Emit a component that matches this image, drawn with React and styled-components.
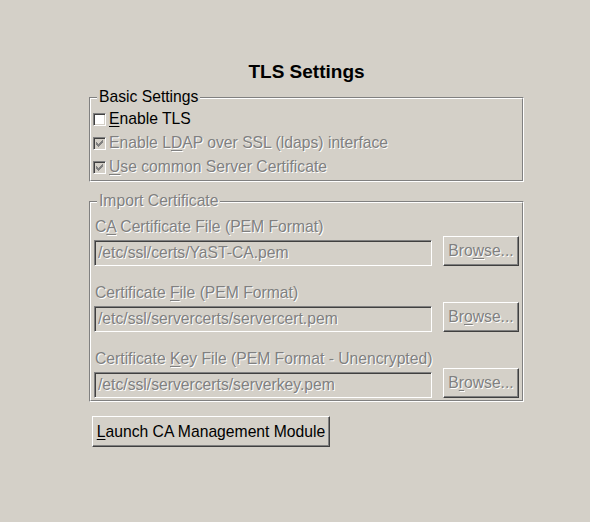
import React from 'react';
import styled, { createGlobalStyle, css } from 'styled-components';

const Global = createGlobalStyle`
  html, body { margin: 0; padding: 0; background: #d4d0c8; }
  body { font-family: "Liberation Sans", Arial, sans-serif; }
  *, *::before, *::after { box-sizing: border-box; }
`;

const disabledText = css`
  color: #808080;
  text-shadow: 1px 1px 0 #ffffff;
`;

const Page = styled.div`
  width: 590px;
  height: 522px;
  padding: 60px 0 0 89px;
  display: flex;
  flex-direction: column;
  font-size: 15.7px;
`;

const Column = styled.div`
  width: 435px;
  display: flex;
  flex-direction: column;
`;

const Title = styled.h1`
  margin: 0;
  font: bold 19px "Liberation Sans", Arial, sans-serif;
  line-height: 24px;
  text-align: center;
  color: #000;
`;

const Frame = styled.div`
  position: relative;
  margin-top: ${p => p.$mt}px;
  border: 1px solid;
  border-color: #808080 #ffffff #ffffff #808080;
`;

const FrameInner = styled.div`
  border: 1px solid;
  border-color: #ffffff #808080 #808080 #ffffff;
  display: flex;
  flex-direction: column;
  padding: ${p => p.$pad};
`;

const Legend = styled.span`
  position: absolute;
  top: -10px;
  left: 7px;
  padding: 0 2px;
  line-height: 18px;
  background: #d4d0c8;
  color: #000;
  ${p => p.$disabled && disabledText}
`;

const CheckRow = styled.label`
  display: flex;
  align-items: center;
  gap: 3px;
  height: 24px;
  padding-left: 1px;
  color: #000;
  ${p => p.$disabled && disabledText}
`;

const Box = styled.span`
  width: 13px;
  height: 13px;
  flex: none;
  display: flex;
  align-items: center;
  justify-content: center;
  border: 1px solid;
  border-color: #808080 #ffffff #ffffff #808080;
  box-shadow: inset 1px 1px 0 #404040, inset -1px -1px 0 #d4d0c8;
  background: ${p => (p.$disabled ? '#d4d0c8' : '#ffffff')};
`;

const Mn = styled.u`
  text-decoration: underline;
  text-underline-offset: 2px;
  text-decoration-thickness: 1px;
`;

const FieldGroup = styled.div`
  display: flex;
  flex-direction: column;
  & + & { margin-top: 18px; }
`;

const FieldLabel = styled.div`
  height: 18px;
  line-height: 18px;
  padding-left: 1px;
  ${p => (p.$disabled ? disabledText : 'color:#000;')}
`;

const FieldRow = styled.div`
  display: flex;
  align-items: flex-end;
  gap: 11px;
  height: 30px;
`;

const PathInput = styled.input`
  width: 338px;
  height: 26px;
  margin: 0;
  padding: 0 3px;
  font: 15.7px "Liberation Sans", Arial, sans-serif;
  background: #d4d0c8;
  border: 1px solid;
  border-color: #808080 #ffffff #ffffff #808080;
  box-shadow: inset 1px 1px 0 #404040, inset -1px -1px 0 #d4d0c8;
  outline: none;
  ${disabledText}
  -webkit-text-fill-color: #808080;
`;

const Button = styled.button`
  width: ${p => p.$w}px;
  height: ${p => p.$h}px;
  margin: ${p => p.$m || 0};
  padding: 0;
  font: 15.7px "Liberation Sans", Arial, sans-serif;
  background: #d4d0c8;
  border: 1px solid;
  border-color: #ffffff #404040 #404040 #ffffff;
  box-shadow: inset -1px -1px 0 #808080;
  display: flex;
  align-items: center;
  justify-content: center;
  color: #000;
  ${p => p.$disabled && disabledText}
`;

const Check = () => (
  <svg width="7" height="7" viewBox="0 0 7 7" shapeRendering="crispEdges">
    <path d="M0 2h1v1h1v1h1v-1h1v-1h1v-1h1v-1h1v3h-1v1h-1v1h-1v1h-1v1h-1v-1h-1v-1h-1z" fill="#808080" />
  </svg>
);

const checks = [
  { pre: '', mn: 'E', post: 'nable TLS', disabled: false, checked: false },
  { pre: 'Enable L', mn: 'D', post: 'AP over SSL (ldaps) interface', disabled: true, checked: true },
  { pre: '', mn: 'U', post: 'se common Server Certificate', disabled: true, checked: true },
];

const fields = [
  { pre: 'C', mn: 'A', post: ' Certificate File (PEM Format)', value: '/etc/ssl/certs/YaST-CA.pem', b: ['Bro', 'w', 'se...'] },
  { pre: 'Certificate ', mn: 'F', post: 'ile (PEM Format)', value: '/etc/ssl/servercerts/servercert.pem', b: ['Br', 'o', 'wse...'] },
  { pre: 'Certificate ', mn: 'K', post: 'ey File (PEM Format - Unencrypted)', value: '/etc/ssl/servercerts/serverkey.pem', b: ['B', 'r', 'owse...'] },
];

export default function App() {
  return (
    <>
      <Global />
      <Page>
        <Column>
          <Title>TLS Settings</Title>
          <Frame $mt={13}>
            <Legend>Basic Settings</Legend>
            <FrameInner $pad="8px 0 1px 1px">
              {checks.map((c, i) => (
                <CheckRow key={i} $disabled={c.disabled}>
                  <Box $disabled={c.disabled}>{c.checked && <Check />}</Box>
                  <span>
                    {c.pre}
                    <Mn>{c.mn}</Mn>
                    {c.post}
                  </span>
                </CheckRow>
              ))}
            </FrameInner>
          </Frame>
          <Frame $mt={19}>
            <Legend $disabled>Import Certificate</Legend>
            <FrameInner $pad="15px 3px 2px 3px">
              {fields.map((f, i) => (
                <FieldGroup key={i}>
                  <FieldLabel $disabled>
                    {f.pre}
                    <Mn>{f.mn}</Mn>
                    {f.post}
                  </FieldLabel>
                  <FieldRow>
                    <PathInput disabled value={f.value} readOnly />
                    <Button $w={76} $h={30} $disabled disabled>
                      <span>
                        {f.b[0]}
                        <Mn>{f.b[1]}</Mn>
                        {f.b[2]}
                      </span>
                    </Button>
                  </FieldRow>
                </FieldGroup>
              ))}
            </FrameInner>
          </Frame>
          <Button $w={238} $h={31} $m="14px 0 0 3px">
            <span>
              <Mn>L</Mn>aunch CA Management Module
            </span>
          </Button>
        </Column>
      </Page>
    </>
  );
}
